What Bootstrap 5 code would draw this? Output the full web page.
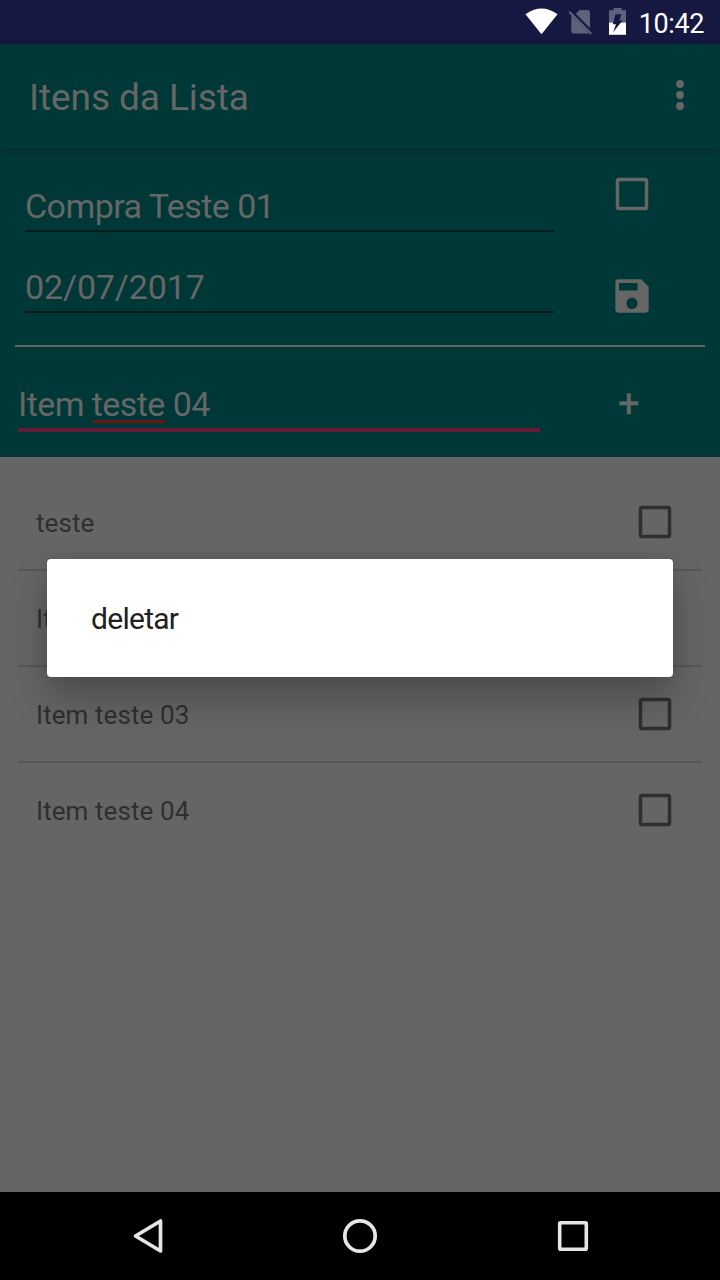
<!DOCTYPE html>
<html lang="pt-BR">
<head>
<meta charset="utf-8">
<meta name="viewport" content="width=device-width, initial-scale=1">
<title>Itens da Lista</title>
<link href="https://cdn.jsdelivr.net/npm/bootstrap@5.3.0/dist/css/bootstrap.min.css" rel="stylesheet">
<style>
  body { font-family: Roboto, sans-serif; background: #000; }
  .screen { width: 720px; height: 1280px; background: #656565; color: #666; }
  .screen svg { display: block; flex: none; }
  .status-bar { height: 44px; background: #151941; color: #fff; padding-right: 16px; }
  .clock { font-size: 27px; line-height: 44px; letter-spacing: -.4px; margin-left: 12px; padding-top: 3px; }
  .app-bar { height: 104px; padding: 0 34px 0 29px; background: #003837; box-shadow: 0 1px 7px rgba(0,0,0,.3); z-index: 1; }
  .app-bar svg { margin-bottom: 2px; }
  .app-title { font-size: 37px; line-height: 44px; padding-top: 3px; letter-spacing: -.08px; }
  .form-area { height: 309px; background: #003837; }
  .field-line { border-bottom: 2px solid #001b1a; font-size: 34px; line-height: 40px; padding-bottom: 4px; width: 529px; margin-left: 25px; letter-spacing: -.55px; }
  .field-date { letter-spacing: -.12px; }
  .rule-line { height: 2px; margin: 32px 15px 0; background: #666; }
  .new-item { border-bottom: 4px solid #631b36; font-size: 34px; line-height: 40px; padding-bottom: 4px; width: 522px; margin-left: 18px; letter-spacing: -.57px; }
  .misspelt { border-bottom: 3px solid #6a1714; display: inline-block; line-height: 30px; padding-bottom: 1px; margin-bottom: -1px; }
  .plus { font-size: 38px; line-height: 41px; font-weight: 400; margin-left: 78px; -webkit-text-stroke: .4px #666; }
  .items { padding: 18px 18px 0; }
  .item-row { height: 96px; border-bottom: 2px solid #575757; padding: 0 30px 0 18px; color: #2f2f2f; font-size: 26px; }
  .item-row span { padding-top: 2px; letter-spacing: .08px; }
  .item-row:last-child { border-color: transparent; }
  .nav-keys { height: 88px; background: #000; padding: 0 41px; }
  .menu-dialog { left: 47px; top: 559px; width: 626px; height: 118px; border-radius: 4px; background: #fff; color: #212121; padding: 1px 44px 0; font-size: 30px; letter-spacing: -.72px; z-index: 2; box-shadow: 0 22px 38px rgba(0,0,0,.24), 0 0 14px rgba(0,0,0,.1); }
</style>
</head>
<body>
<svg width="0" height="0" class="position-absolute">
  <symbol id="box" viewBox="0 0 34 34"><rect x="2.5" y="2.5" width="29" height="29" rx="1.6" fill="none" stroke="currentColor" stroke-width="3.5"/></symbol>
</svg>
<div class="screen position-relative d-flex flex-column overflow-hidden">
  <header class="status-bar d-flex align-items-center justify-content-end">
    <svg width="102" height="44" viewBox="525 0 102 44">
      <path d="M525.5 14.2Q541.500 2.800 557.500 14.200L541.500 34.300Z" fill="#fff"/>
      <path d="M579.500 10H587.500Q590 10 590 12.500V29.500L575.200 14.600ZM571.300 15.200L589 33Q588.500 33.500 587.500 33.500H573.800Q571.300 33.500 571.300 31Z" fill="#5f627c"/>
      <path d="M571.300 13.800L576 14L590 28V31.500Z" fill="#151941"/>
      <path d="M569.300 11.800L591.400 34" stroke="#5f627c" stroke-width="2"/>
      <path d="M609 22.500V10.300H613.500V8H621.700V10.300H626V22.500Z" fill="#5f627c"/>
      <path d="M609 22.500H626V34.800H609Z" fill="#fff"/>
      <path d="M615.500 14.200H621.500L619.300 20.500H622.600L613 32.300L616 24.200H612.800Z" fill="#151941"/>
    </svg>
    <span class="clock">10:42</span>
  </header>

  <nav class="app-bar d-flex align-items-center justify-content-between position-relative">
    <span class="app-title">Itens da Lista</span>
    <svg width="12" height="32" viewBox="0 0 12 32" fill="#666"><circle cx="6" cy="5" r="3.900"/><circle cx="6" cy="16" r="3.900"/><circle cx="6" cy="27" r="3.900"/></svg>
  </nav>

  <section class="form-area">
    <div class="d-flex">
      <div>
        <div class="field-line" style="margin-top:38px">Compra Teste 01</div>
        <div class="field-line field-date" style="margin-top:35px">02/07/2017</div>
      </div>
      <div class="d-flex flex-column" style="margin-left:61px">
        <svg width="34" height="34" style="margin-top:29px"><use href="#box"/></svg>
        <svg width="34" height="34" viewBox="2.800 2.800 18.400 18.400" style="margin-top:68px" fill="currentColor"><path d="M17 3H4.500C3.600 3 3 3.600 3 4.500v15c0 .9.600 1.500 1.500 1.500h15c.9 0 1.500-.6 1.500-1.500V7l-4-4zm-5 16c-1.660 0-3-1.340-3-3s1.340-3 3-3 3 1.340 3 3-1.340 3-3 3zm3-10H5V5h10v4z"/></svg>
      </div>
    </div>
    <div class="rule-line"></div>
    <div class="d-flex" style="margin-top:37px">
      <div class="new-item">Item <span class="misspelt">teste</span> 04</div>
      <span class="plus">+</span>
    </div>
  </section>

  <main class="items flex-grow-1">
    <div class="item-row d-flex align-items-center justify-content-between"><span>teste</span><svg width="34" height="34"><use href="#box"/></svg></div>
    <div class="item-row d-flex align-items-center justify-content-between"><span>It</span><svg width="34" height="34"><use href="#box"/></svg></div>
    <div class="item-row d-flex align-items-center justify-content-between"><span>Item teste 03</span><svg width="34" height="34"><use href="#box"/></svg></div>
    <div class="item-row d-flex align-items-center justify-content-between"><span>Item teste 04</span><svg width="34" height="34"><use href="#box"/></svg></div>
  </main>

  <footer class="nav-keys">
    <div class="row g-0 h-100 align-items-center">
      <div class="col d-flex justify-content-center"><svg width="36" height="40" viewBox="0 0 36 40"><path d="M31.500 5V35L6.500 20Z" fill="none" stroke="#e6e6e6" stroke-width="3.700" stroke-linejoin="round"/></svg></div>
      <div class="col d-flex justify-content-center"><svg width="40" height="40" viewBox="0 0 40 40"><circle cx="20" cy="20" r="15.200" fill="none" stroke="#e6e6e6" stroke-width="3.700"/></svg></div>
      <div class="col d-flex justify-content-center"><svg width="40" height="40" viewBox="0 0 40 40"><rect x="6.700" y="6.700" width="26.600" height="26.600" rx="1" fill="none" stroke="#e6e6e6" stroke-width="3.600"/></svg></div>
    </div>
  </footer>

  <div class="menu-dialog position-absolute d-flex align-items-center" role="dialog"><span>deletar</span></div>
</div>
<script src="https://cdn.jsdelivr.net/npm/bootstrap@5.3.0/dist/js/bootstrap.bundle.min.js"></script>
</body>
</html>
